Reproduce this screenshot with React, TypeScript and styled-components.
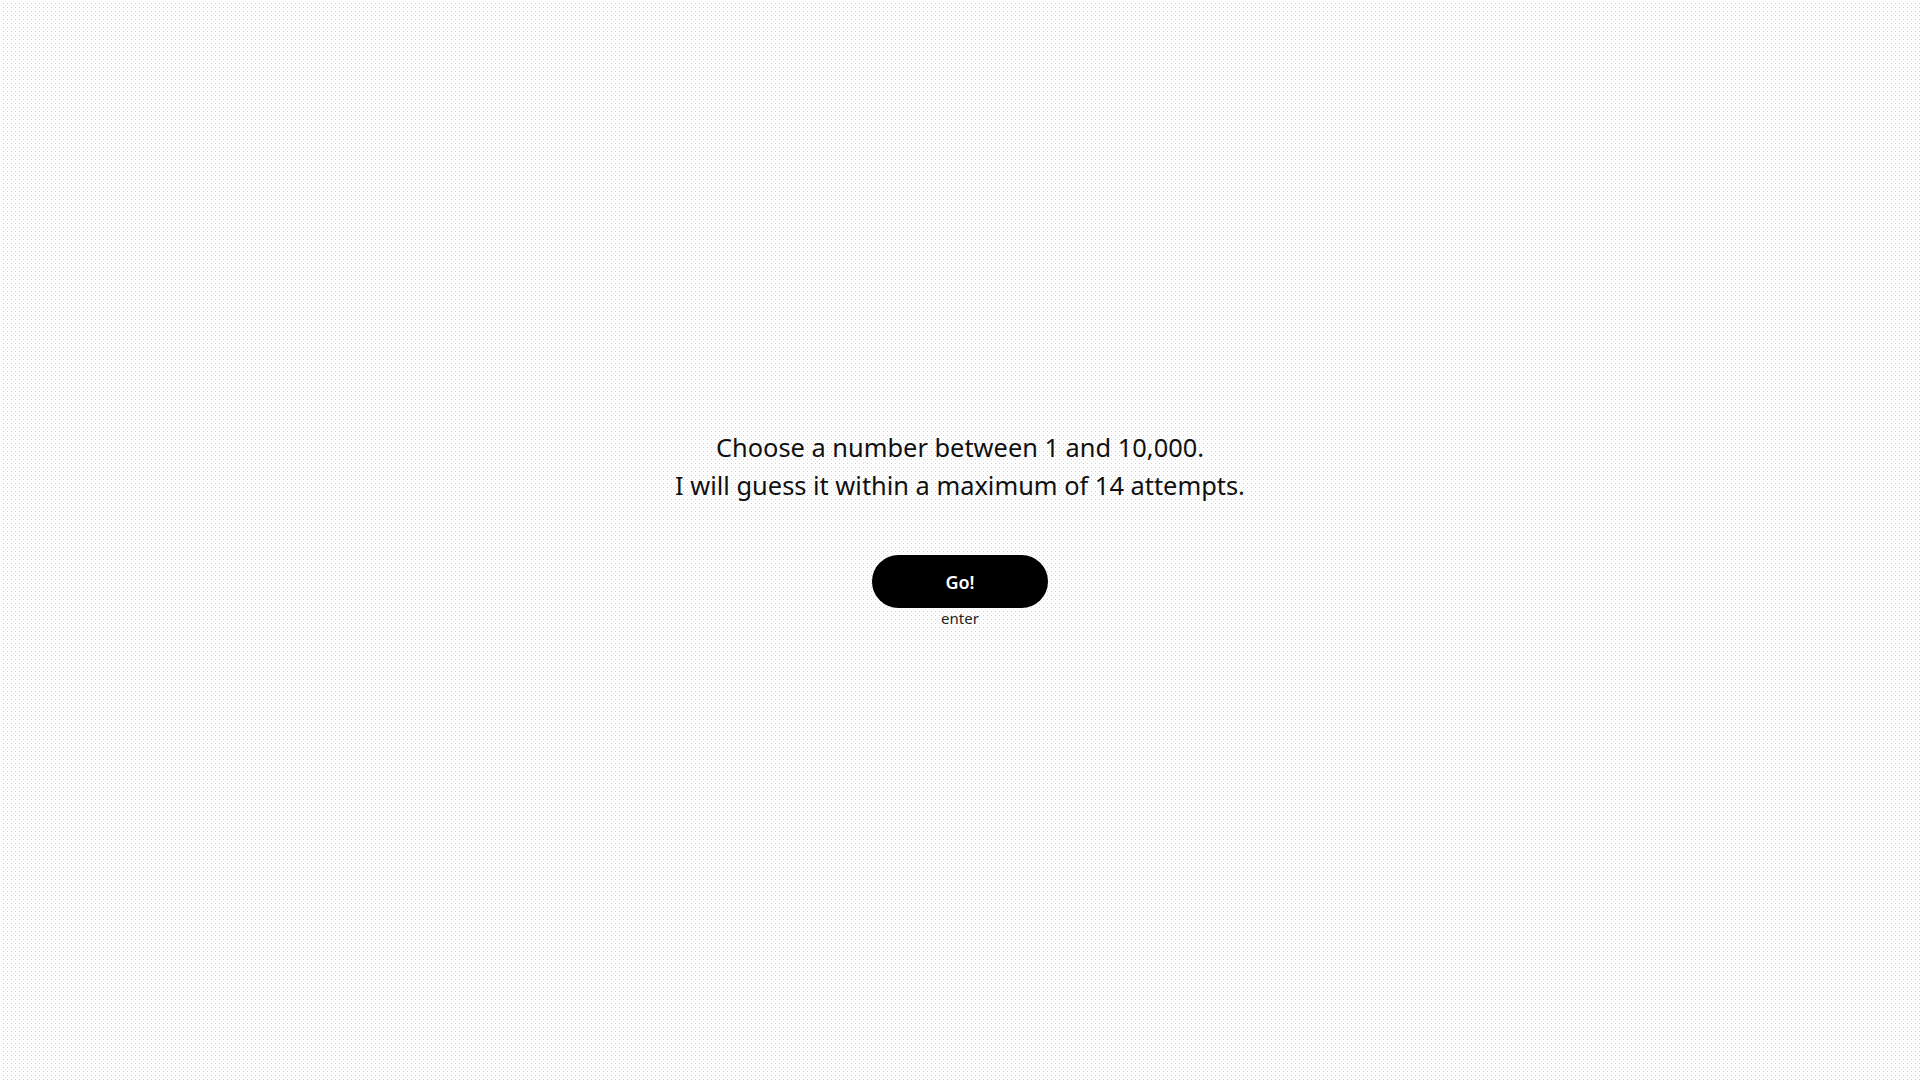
import React from "react";
import styled, { createGlobalStyle } from "styled-components";

const GlobalStyle = createGlobalStyle`
  html, body {
    margin: 0;
    padding: 0;
    height: 100%;
  }
  body {
    font-family: "Noto Sans", "Open Sans", sans-serif;
    color: #111;
    background-color: #fefefe;
    background-image:
      conic-gradient(at 1px 1px, transparent 75%, #f3f18e 0),
      conic-gradient(at 1px 1px, transparent 75%, #c9c9f3 0);
    background-size: 4px 4px, 4px 4px;
    background-position: 1px 1px, 3px 3px;
  }
  #root {
    min-height: 100vh;
  }
`;

const Page = styled.main`
  min-height: 100vh;
  display: flex;
  flex-direction: column;
  align-items: center;
  justify-content: flex-start;
  padding-top: 428px;
  box-sizing: border-box;
`;

const Prompt = styled.p`
  margin: 0;
  font-size: 25.4px;
  line-height: 38px;
  text-align: center;
  color: #111;
`;

const ActionGroup = styled.div`
  margin-top: 51px;
  display: flex;
  flex-direction: column;
  align-items: center;
`;

const GoButton = styled.button`
  width: 176px;
  height: 53px;
  border: none;
  border-radius: 27px;
  background: #000;
  color: #fff;
  font-family: "Noto Sans", "Open Sans", sans-serif;
  font-size: 18px;
  font-weight: 600;
  cursor: pointer;
  padding: 0;
`;

const KeyHint = styled.span`
  font-size: 15px;
  line-height: 20px;
  color: #222;
`;

export default function App() {
  return (
    <>
      <GlobalStyle />
      <Page>
        <Prompt>
          Choose a number between 1 and 10,000.
          <br />I will guess it within a maximum of 14 attempts.
        </Prompt>
        <ActionGroup>
          <GoButton>Go!</GoButton>
          <KeyHint>enter</KeyHint>
        </ActionGroup>
      </Page>
    </>
  );
}
